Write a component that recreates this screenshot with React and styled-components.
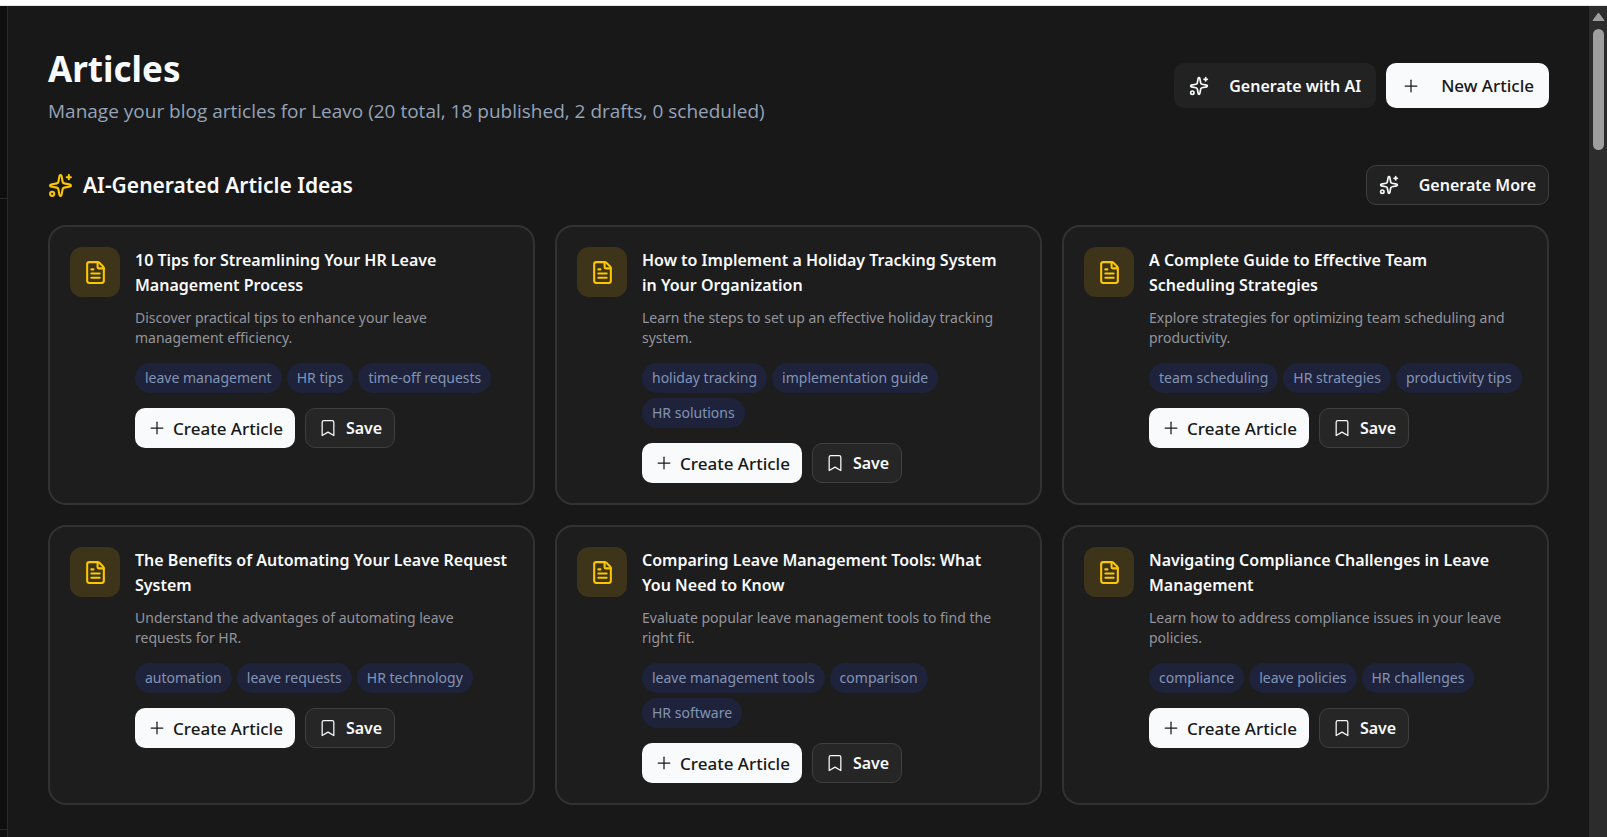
import React from 'react'
import styled, { createGlobalStyle } from 'styled-components'
import { Sparkles, Plus, FileText, Bookmark } from 'lucide-react'

const GlobalStyle = createGlobalStyle`
    * {
        box-sizing: border-box;
    }
    body {
        margin: 0;
        background-color: #181818;
        color: #f8fafc;
        font-family: "Segoe UI", "Noto Sans", "Open Sans", sans-serif;
        overflow: hidden;
    }
    h1, h2, h3, p, ul {
        margin: 0;
        padding: 0;
    }
`

const Page = styled.div`
    display: flex;
    flex-direction: column;
    height: 100vh;
`

const TopEdge = styled.div`
    flex: none;
    height: 6px;
    background-color: #ffffff;
    border-bottom: 1px solid #dfe9e0;
`

const Body = styled.div`
    display: flex;
    flex: 1;
    min-height: 0;
`

const Sidebar = styled.aside`
    display: flex;
    flex-direction: column;
    flex: none;
    width: 8px;
    background-color: #0f0f0f;
    border-right: 1px solid #2a2a2a;
`

const SidebarGroup = styled.div`
    flex: none;
    height: ${(props) => props.$altura};
    border-bottom: 1px solid #2a2a2a;
`

const Main = styled.main`
    display: flex;
    flex-direction: column;
    flex: 1;
    min-width: 0;
    padding: 40px;
    overflow: hidden;
`

const Scrollbar = styled.div`
    display: flex;
    flex-direction: column;
    align-items: center;
    flex: none;
    width: 18px;
    padding-top: 6px;
    gap: 7px;
    background-color: #2c2c2c;
`

const ScrollThumb = styled.div`
    width: 11px;
    height: 121px;
    border-radius: 6px;
    background-color: #9f9f9f;
`

const Header = styled.header`
    display: flex;
    align-items: center;
    justify-content: space-between;
    margin-bottom: 40px;
`

const Title = styled.h1`
    font-size: 35px;
    font-weight: 700;
    line-height: 46px;
`

const Subtitle = styled.p`
    margin-top: 5px;
    color: #94a3b8;
    font-family: "Segoe UI", "Open Sans", sans-serif;
    font-size: 19px;
    line-height: 28px;
`

const Actions = styled.div`
    display: flex;
    gap: 10px;
`

const Button = styled.button`
    display: inline-flex;
    align-items: center;
    justify-content: center;
    height: 40px;
    padding: 0 12px;
    gap: 20px;
    border: 1px solid #3f3f3f;
    border-radius: 10px;
    background-color: #222222;
    color: #f8fafc;
    font-family: inherit;
    font-size: 16px;
    font-weight: 600;
    white-space: nowrap;
    cursor: pointer;
`

const HeaderButton = styled(Button)`
    height: 45px;
    padding: 0 14px;
    border-color: transparent;
`

const NewButton = styled(HeaderButton)`
    background-color: #f8fafc;
    color: #181818;
    font-size: 17px;
    font-weight: 500;
`

const CreateButton = styled(Button)`
    padding: 0 11px;
    gap: 6px;
    border-color: transparent;
    background-color: #f8fafc;
    color: #181818;
    font-size: 17px;
    font-weight: 500;
`

const SaveButton = styled(Button)`
    gap: 8px;
    background-color: #262626;
`

const SectionHeader = styled.div`
    display: flex;
    align-items: center;
    justify-content: space-between;
    margin-bottom: 20px;
`

const SectionTitle = styled.h2`
    display: flex;
    align-items: center;
    gap: 10px;
    font-size: 21px;
    font-weight: 600;
    line-height: 35px;

    svg {
        color: #fdc700;
    }
`

const Grid = styled.div`
    display: grid;
    grid-template-columns: repeat(3, 1fr);
    gap: 20px;
`

const Card = styled.article`
    display: flex;
    align-items: flex-start;
    gap: 15px;
    padding: 20px;
    border: 2px solid #323232;
    border-radius: 18px;
    background-color: #1d1d1d;
`

const IconBox = styled.div`
    display: flex;
    align-items: center;
    justify-content: center;
    flex: none;
    width: 50px;
    height: 50px;
    border-radius: 12px;
    background-color: #3d3419;
    color: #fdc700;
`

const CardContent = styled.div`
    flex: 1;
    min-width: 0;
    padding-top: 1px;
`

const CardTitle = styled.h3`
    font-size: 16px;
    font-weight: 600;
    line-height: 25px;
    white-space: pre-line;
`

const Description = styled.p`
    margin-top: 10px;
    color: #94949c;
    font-size: 14px;
    line-height: 20px;
`

const Tags = styled.ul`
    display: flex;
    flex-wrap: wrap;
    gap: 5px;
    margin: 15px 0;
    list-style: none;
`

const Tag = styled.li`
    padding: 5px 10px;
    border-radius: 15px;
    background-color: #1e233b;
    color: #8294b5;
    font-size: 14px;
    line-height: 20px;
    white-space: nowrap;
`

const artigos = [
    {
        titulo: '10 Tips for Streamlining Your HR Leave\nManagement Process',
        descricao: 'Discover practical tips to enhance your leave management efficiency.',
        tags: ['leave management', 'HR tips', 'time-off requests'],
    },
    {
        titulo: 'How to Implement a Holiday Tracking System\nin Your Organization',
        descricao: 'Learn the steps to set up an effective holiday tracking system.',
        tags: ['holiday tracking', 'implementation guide', 'HR solutions'],
    },
    {
        titulo: 'A Complete Guide to Effective Team\nScheduling Strategies',
        descricao: 'Explore strategies for optimizing team scheduling and productivity.',
        tags: ['team scheduling', 'HR strategies', 'productivity tips'],
    },
    {
        titulo: 'The Benefits of Automating Your Leave Request\nSystem',
        descricao: 'Understand the advantages of automating leave requests for HR.',
        tags: ['automation', 'leave requests', 'HR technology'],
    },
    {
        titulo: 'Comparing Leave Management Tools: What\nYou Need to Know',
        descricao: 'Evaluate popular leave management tools to find the right fit.',
        tags: ['leave management tools', 'comparison', 'HR software'],
    },
    {
        titulo: 'Navigating Compliance Challenges in Leave\nManagement',
        descricao: 'Learn how to address compliance issues in your leave policies.',
        tags: ['compliance', 'leave policies', 'HR challenges'],
    },
]

function ArticleIdea({ titulo, descricao, tags }) {
    return (
        <Card>
            <IconBox>
                <FileText size={25} />
            </IconBox>
            <CardContent>
                <CardTitle>{titulo}</CardTitle>
                <Description>{descricao}</Description>
                <Tags>
                    {tags.map((tag) => (
                        <Tag key={tag}>{tag}</Tag>
                    ))}
                </Tags>
                <Actions>
                    <CreateButton>
                        <Plus size={20} strokeWidth={1.5} />
                        Create Article
                    </CreateButton>
                    <SaveButton>
                        <Bookmark size={20} strokeWidth={1.5} />
                        Save
                    </SaveButton>
                </Actions>
            </CardContent>
        </Card>
    )
}

function App() {
    return (
        <Page>
            <GlobalStyle />
            <TopEdge />
            <Body>
                <Sidebar>
                    <SidebarGroup $altura="193px" />
                    <SidebarGroup $altura="631px" />
                </Sidebar>
                <Main>
                    <Header>
                        <div>
                            <Title>Articles</Title>
                            <Subtitle>
                                Manage your blog articles for Leavo (20 total, 18 published, 2 drafts, 0 scheduled)
                            </Subtitle>
                        </div>
                        <Actions>
                            <HeaderButton>
                                <Sparkles size={20} />
                                Generate with AI
                            </HeaderButton>
                            <NewButton>
                                <Plus size={20} strokeWidth={1.5} />
                                New Article
                            </NewButton>
                        </Actions>
                    </Header>
                    <SectionHeader>
                        <SectionTitle>
                            <Sparkles size={25} />
                            AI-Generated Article Ideas
                        </SectionTitle>
                        <Button>
                            <Sparkles size={20} />
                            Generate More
                        </Button>
                    </SectionHeader>
                    <Grid>
                        {artigos.map((artigo) => (
                            <ArticleIdea key={artigo.titulo} {...artigo} />
                        ))}
                    </Grid>
                </Main>
                <Scrollbar>
                    <svg width="13" height="10" viewBox="0 0 13 10">
                        <path d="M6.5 1 L12 8.5 H1 Z" fill="#9f9f9f" stroke="#9f9f9f" strokeLinejoin="round" />
                    </svg>
                    <ScrollThumb />
                </Scrollbar>
            </Body>
        </Page>
    )
}

export default App
